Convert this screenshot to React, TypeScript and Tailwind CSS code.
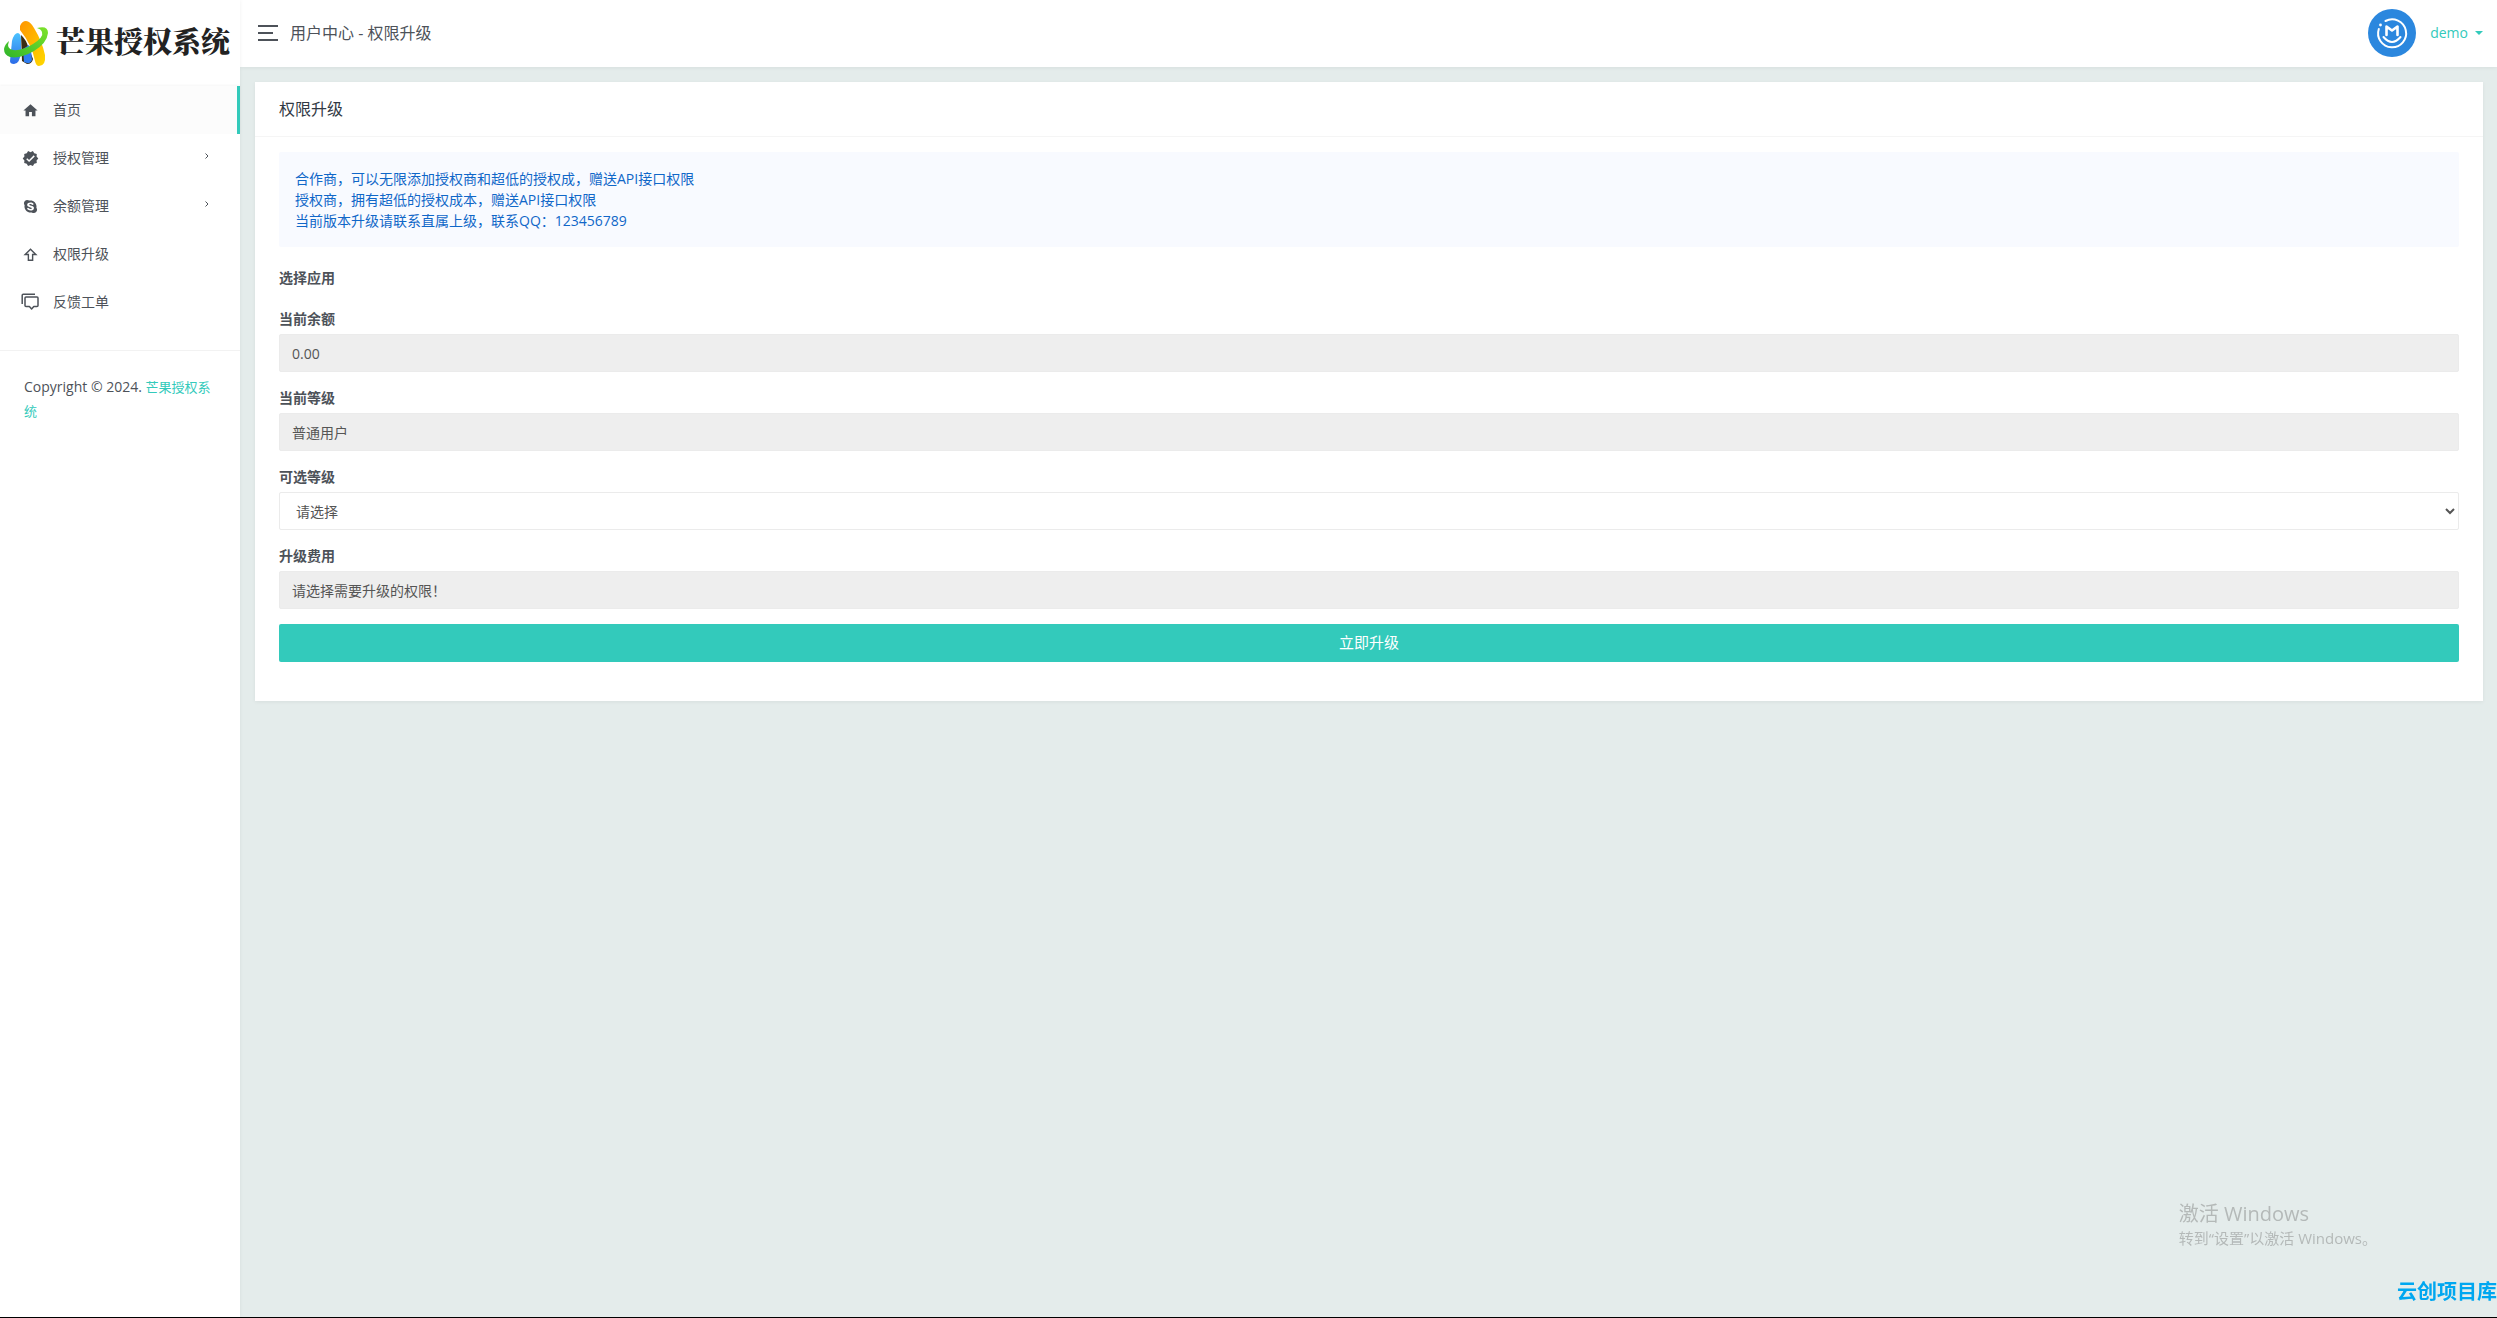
// Import libraries
import type React from "react";

// Icons
import { FaSkype } from "react-icons/fa";

// Sidebar entries
type NavItem = {
    label: string;
    icon: React.ReactNode;
    active?: boolean;
    hasChildren?: boolean;
};

const NAV_ITEMS: NavItem[] = [
    {
        label: "首页",
        active: true,
        icon: (
            <svg viewBox="0 0 24 24" fill="currentColor" className="size-[17px]">
                <path d="M10,20V14H14V20H19V12H22L12,3L2,12H5V20H10Z" />
            </svg>
        ),
    },
    {
        label: "授权管理",
        hasChildren: true,
        icon: (
            <svg viewBox="0 0 24 24" fill="currentColor" className="size-[17px]">
                <path d="M23,12L20.56,9.22L20.9,5.54L17.29,4.72L15.4,1.54L12,3L8.6,1.54L6.71,4.72L3.1,5.53L3.44,9.21L1,12L3.44,14.78L3.1,18.47L6.71,19.29L8.6,22.47L12,21L15.4,22.46L17.29,19.28L20.9,18.46L20.56,14.78L23,12M10,17L6,13L7.41,11.59L10,14.17L16.59,7.58L18,9L10,17Z" />
            </svg>
        ),
    },
    {
        label: "余额管理",
        hasChildren: true,
        icon: <FaSkype className="size-[15px]" />,
    },
    {
        label: "权限升级",
        icon: (
            <svg viewBox="0 0 24 24" fill="currentColor" className="size-[17px]">
                <path d="M16,13V21H8V13H2L12,3L22,13H16M7,11H10V19H14V11H17L12,6L7,11Z" />
            </svg>
        ),
    },
    {
        label: "反馈工单",
        icon: (
            <svg viewBox="0 0 18 18" fill="none" stroke="currentColor" strokeWidth="1.5" strokeLinejoin="round" className="size-[18px]">
                <path d="M1.2 11V2.2Q1.2 1.2 2.2 1.2H14" />
                <path d="M5 4H16Q17 4 17 5V12.6Q17 13.6 16 13.6H12.8L10.6 16L8.4 13.6H5Q4 13.6 4 12.6V5Q4 4 5 4Z" />
            </svg>
        ),
    },
];

// Two slanted strokes inside a green ring
const Logo: React.FC = () => (
    <svg viewBox="0 0 44 45" className="w-11 shrink-0" aria-hidden="true">
        <defs>
            <linearGradient id="leg" x1="0" y1="0" x2="1" y2="1">
                <stop offset="0" stopColor="#ff9500" />
                <stop offset="1" stopColor="#ffd900" />
            </linearGradient>
            <linearGradient id="blue" x1="0" y1="0" x2="0" y2="1">
                <stop offset="0" stopColor="#4cc3ff" />
                <stop offset="1" stopColor="#2b6be8" />
            </linearGradient>
            <linearGradient id="ring" x1="0" y1="1" x2="1" y2="0">
                <stop offset="0" stopColor="#2fb52c" />
                <stop offset="1" stopColor="#7ee32a" />
            </linearGradient>
        </defs>
        <path d="M17 14Q22 18 25 28L29 38Q28 43 23 43L18 40Z" fill="#3b2d12" />
        <path d="M19 28L25 24Q28 32 28 39Q26 44 20 41Z" fill="#2f7df0" />
        <path d="M8 20Q10 12 14 12Q17 13 17 18V30Q16 43 10 43Q6 43 6 40Z" fill="url(#blue)" />
        <path d="M16 5Q18 0 22 0Q26 0 30 7Q38 20 41 34Q42 45 35 45Q32 45 31 40Q28 24 16 9Z" fill="url(#leg)" />
        <path d="M33 7Q44 4 44 12Q43 22 30 30Q16 38 6 36Q0 34 0 28Q1 23 5 20Q2 28 9 29Q18 30 29 23Q40 16 38 11Q37 8 33 7Z" fill="url(#ring)" />
    </svg>
);

const Avatar: React.FC = () => (
    <svg viewBox="0 0 48 48" className="size-12" aria-hidden="true">
        <circle cx="24" cy="24" r="24" fill="#2b87de" />
        <g fill="none" stroke="#fff" strokeWidth="2" strokeLinecap="round" strokeLinejoin="round">
            <path d="M17.5 12A14 14 0 1 1 10.8 20" />
            <path d="M18.5 26V17.5L24 21.5L29.5 17.5V26" strokeWidth="2.6" />
            <path d="M15.5 28Q24 38 32.5 28" />
        </g>
        <circle cx="12.5" cy="16" r="1.4" fill="#fff" />
    </svg>
);

const Sidebar: React.FC = () => (
    <aside className="z-20 w-60 shrink-0 bg-white shadow-[0_0_4px_rgba(0,0,0,0.06)]">
        <a href="#" className="flex h-[86px] items-center gap-2 pl-1 text-[29px] font-black whitespace-nowrap text-[#222]">
            <Logo />
            <span className="pb-1 font-['Noto_Serif_CJK_SC','Noto_Sans_CJK_SC',serif]">芒果授权系统</span>
        </a>

        <nav className="border-b border-[#f2f2f2] pb-6">
            <ul>
                {NAV_ITEMS.map((item) => (
                    <li key={item.label}>
                        <a
                            href="#"
                            className={
                                item.active
                                    ? "flex h-12 items-center border-r-3 border-[#33cabb] bg-[#fcfcfc] pl-5 shadow-[0_-1px_2px_rgba(0,0,0,0.04)]"
                                    : "flex h-12 items-center pr-[30px] pl-5"
                            }
                        >
                            <span className="mr-[13px] flex w-5 justify-center">{item.icon}</span>
                            <span className="flex-1">{item.label}</span>
                            {item.hasChildren && (
                                <svg viewBox="0 0 6 6" fill="none" stroke="currentColor" className="mb-1 size-[6px]">
                                    <path d="M1.5 0.5L4 3L1.5 5.5" />
                                </svg>
                            )}
                        </a>
                    </li>
                ))}
            </ul>
        </nav>

        <p className="p-6 leading-6">
            Copyright © 2024. <a href="#" className="text-[13px] text-[#33cabb]">芒果授权系统</a>
        </p>
    </aside>
);

const Header: React.FC = () => (
    <header className="z-10 flex h-[67px] items-center justify-between bg-white pr-[14px] pb-[2px] pl-[18px] shadow-[0_1px_4px_rgba(0,0,0,0.06)]">
        <div className="flex items-center gap-3">
            <button type="button" aria-label="菜单" className="flex w-5 flex-col gap-[5px]">
                <span className="h-[2px] w-5 bg-[#4d5259]" />
                <span className="h-[2px] w-[15px] bg-[#4d5259]" />
                <span className="h-[2px] w-5 bg-[#4d5259]" />
            </button>
            <span className="text-base">用户中心 - 权限升级</span>
        </div>

        <button type="button" className="flex items-center text-[#33cabb]">
            <Avatar />
            <span className="mr-[7px] ml-[14px]">demo</span>
            <svg viewBox="0 0 8 4" fill="currentColor" className="w-2">
                <path d="M0 0H8L4 4Z" />
            </svg>
        </button>
    </header>
);

type ReadOnlyFieldProps = {
    id: string;
    label: string;
    value: string;
};

const ReadOnlyField: React.FC<ReadOnlyFieldProps> = ({ id, label, value }) => (
    <div className="mb-[15px]">
        <label htmlFor={id} className="mb-[5px] block leading-[21px] font-bold">{label}</label>
        <input
            id={id}
            defaultValue={value}
            disabled
            className="block h-[38px] w-full rounded-xs border border-[#ebebeb] bg-[#eee] px-3 text-[#555]"
        />
    </div>
);

// Main component
const App: React.FC = () => {
    return (
        <div className="flex min-h-screen overflow-hidden border-b border-black bg-[#e4eceb] font-['Open_Sans','Noto_Sans_CJK_SC',sans-serif] text-sm text-[#4d5259]">
            <Sidebar />

            <div className="flex min-w-0 flex-1 flex-col">
                <Header />

                <main className="flex-1 pt-[15px] pr-[14px] pl-[15px]">
                    <section className="bg-white shadow-[0_1px_4px_rgba(0,0,0,0.06)]">
                        <h4 className="border-b border-[#f5f5f5] px-6 py-[15px] text-base leading-6 text-[#313944]">权限升级</h4>

                        <form className="px-6 pt-[15px] pb-[39px]">
                            <div className="mb-5 rounded-xs bg-[#f8faff] p-4 leading-[21px] text-[#1067c8]">
                                <p>合作商，可以无限添加授权商和超低的授权成，赠送API接口权限</p>
                                <p>授权商，拥有超低的授权成本，赠送API接口权限</p>
                                <p>当前版本升级请联系直属上级，联系QQ：123456789</p>
                            </div>

                            <p className="mb-5 leading-[21px] font-bold">选择应用</p>

                            <ReadOnlyField id="balance" label="当前余额" value="0.00" />
                            <ReadOnlyField id="level" label="当前等级" value="普通用户" />

                            <div className="mb-[15px]">
                                <label htmlFor="target" className="mb-[5px] block leading-[21px] font-bold">可选等级</label>
                                <select id="target" className="block h-[38px] w-full rounded-xs border border-[#ebebeb] bg-white px-3 text-[#555]">
                                    <option>请选择</option>
                                </select>
                            </div>

                            <ReadOnlyField id="cost" label="升级费用" value="请选择需要升级的权限！" />

                            <button type="button" className="block h-[38px] w-full rounded-xs bg-[#33cabb] text-[15px] text-white">
                                立即升级
                            </button>
                        </form>
                    </section>
                </main>
            </div>

            {/* Desktop notices floating over the page */}
            <div className="pointer-events-none fixed right-[120px] bottom-[68px] leading-6 text-[#b4b9b8]">
                <p className="text-xl leading-6">激活 Windows</p>
                <p className="text-[15px] leading-6">转到“设置”以激活 Windows。</p>
            </div>
            <p className="pointer-events-none fixed right-0 bottom-3 text-xl leading-7 font-bold whitespace-nowrap text-[#00a7f0]">
                云创项目库
            </p>
        </div>
    )
}

export default App
